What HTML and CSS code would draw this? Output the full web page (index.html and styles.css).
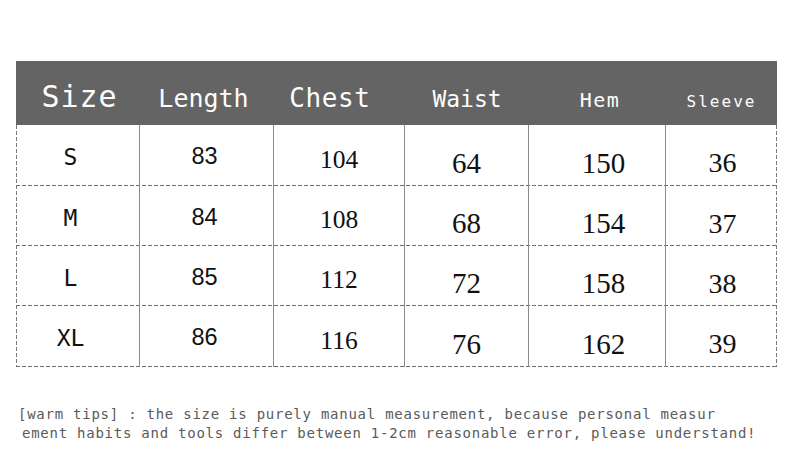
FILE: index.html
```html
<!DOCTYPE html>
<html>
<head>
<meta charset="utf-8">
<link rel="stylesheet" href="styles.css">
</head>
<body>
<div class="chart">
  <div class="head">
    <div class="hc c1"><span class="h-size">Size</span></div>
    <div class="hc c2"><span class="h-length">Length</span></div>
    <div class="hc c3"><span class="h-chest">Chest</span></div>
    <div class="hc c4"><span class="h-waist">Waist</span></div>
    <div class="hc c5"><span class="h-hem">Hem</span></div>
    <div class="hc c6"><span class="h-sleeve">Sleeve</span></div>
  </div>
  <div class="body">
    <div class="row r1">
      <div class="cell c1 sz">S</div>
      <div class="cell c2 ar">83</div>
      <div class="cell c3 tm">104</div>
      <div class="cell c4 big">64</div>
      <div class="cell c5 big">150</div>
      <div class="cell c6 big">36</div>
    </div>
    <div class="row r2">
      <div class="cell c1 sz">M</div>
      <div class="cell c2 ar">84</div>
      <div class="cell c3 tm">108</div>
      <div class="cell c4 big">68</div>
      <div class="cell c5 big">154</div>
      <div class="cell c6 big">37</div>
    </div>
    <div class="row r3">
      <div class="cell c1 sz">L</div>
      <div class="cell c2 ar">85</div>
      <div class="cell c3 tm">112</div>
      <div class="cell c4 big">72</div>
      <div class="cell c5 big">158</div>
      <div class="cell c6 big">38</div>
    </div>
    <div class="row r4">
      <div class="cell c1 sz">XL</div>
      <div class="cell c2 ar">86</div>
      <div class="cell c3 tm">116</div>
      <div class="cell c4 big">76</div>
      <div class="cell c5 big">162</div>
      <div class="cell c6 big">39</div>
    </div>
  </div>
</div>
<div class="tips">
  <div class="tip-line">[warm tips] : the size is purely manual measurement, because personal measur</div>
  <div class="tip-line second">ement habits and tools differ between 1-2cm reasonable error, please understand!</div>
</div>
</body>
</html>
```

FILE: styles.css
```css
html, body {
  margin: 0;
  padding: 0;
  background: #ffffff;
}

body {
  width: 790px;
  height: 465px;
  overflow: hidden;
}

.chart {
  margin: 61px 0 0 16px;
  width: 761px;
}

.head {
  display: flex;
  align-items: baseline;
  height: 64px;
  box-sizing: border-box;
  padding-top: 21px;
  background: #646464;
  color: #fdfdfd;
  font-family: "DejaVu Sans Mono", monospace;
}

.hc {
  display: flex;
  justify-content: center;
  line-height: 1;
}

.c1 { width: 124px; }
.c2 { width: 134px; }
.c3 { width: 131px; }
.c4 { width: 124px; }
.c5 { width: 137px; }
.c6 { width: 111px; }

.h-size { font-size: 30px; letter-spacing: 1px; }
.h-length { font-size: 25px; }
.h-chest { font-size: 26px; letter-spacing: 0.6px; }
.h-waist { font-size: 23px; }
.h-hem { font-size: 20px; letter-spacing: 1.5px; }
.h-sleeve { font-size: 16px; letter-spacing: 2px; }

.hc.c1 { padding-left: 3px; box-sizing: border-box; }
.hc.c2 { padding-right: 7px; box-sizing: border-box; }
.hc.c3 { padding-right: 19px; box-sizing: border-box; }
.hc.c5 { padding-left: 5px; box-sizing: border-box; }

.body {
  background-image:
    repeating-linear-gradient(180deg, #7a7a7a 0 4px, transparent 4px 6px),
    repeating-linear-gradient(180deg, #7a7a7a 0 4px, transparent 4px 6px);
  background-size: 1px 100%, 1px 100%;
  background-position: left top, right top;
  background-repeat: no-repeat;
}

.row {
  display: flex;
  background-image: repeating-linear-gradient(90deg, #6e6e6e 0 4px, transparent 4px 6px);
  background-size: 100% 1px;
  background-position: left bottom;
  background-repeat: no-repeat;
}

.r1 { height: 61px; }
.r2 { height: 60px; }
.r3 { height: 60px; }
.r4 { height: 61px; }

.cell {
  display: flex;
  justify-content: center;
  align-items: center;
  box-sizing: border-box;
  line-height: 1;
  color: #111111;
  border-right: 1px solid #8c8c8c;
}

.cell.c6 { border-right: none; }

.sz {
  font-family: "DejaVu Sans Mono", monospace;
  font-size: 23px;
  padding-top: 4px;
  padding-right: 14px;
}

.ar {
  font-family: "Liberation Sans", Arial, sans-serif;
  font-size: 23.5px;
  padding-top: 3px;
  padding-right: 4px;
}

.tm {
  font-family: "Liberation Serif", "Times New Roman", serif;
  font-size: 25.5px;
  padding-top: 8px;
}

.big {
  font-family: "Liberation Serif", "Times New Roman", serif;
  font-size: 29px;
  padding-top: 15px;
}

.cell.c5 { padding-left: 13px; }
.cell.c6 { font-size: 28px; padding-left: 2px; }

.tips {
  margin-top: 38px;
  font-family: "DejaVu Sans Mono", monospace;
  font-size: 14px;
  letter-spacing: 0.75px;
  line-height: 19px;
  color: #5a5a5a;
  white-space: nowrap;
}

.tip-line { padding-left: 18px; }
.tip-line.second { padding-left: 22px; }
```
